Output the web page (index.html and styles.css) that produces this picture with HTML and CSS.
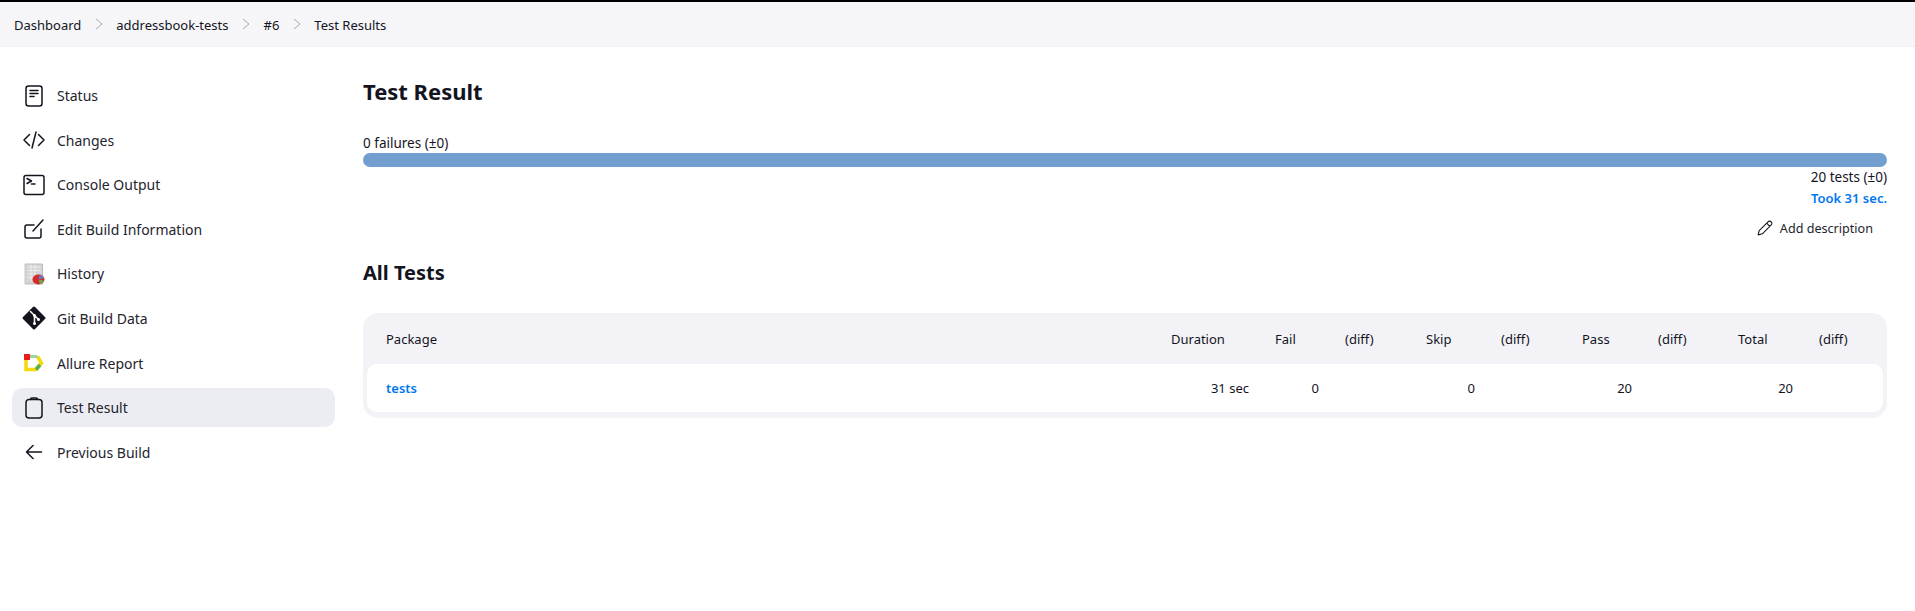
FILE: index.html
```html
<!DOCTYPE html>
<html>
<head>
    <title>Test Results</title>
    <link rel="stylesheet" href="styles.css">
</head>
<body>
    <div class="breadcrumbs">
        <span>Dashboard</span>
        <svg class="crumb-sep" viewBox="0 0 8 12"><path d="M1 1l6 5-6 5"/></svg>
        <span>addressbook-tests</span>
        <svg class="crumb-sep" viewBox="0 0 8 12"><path d="M1 1l6 5-6 5"/></svg>
        <span>#6</span>
        <svg class="crumb-sep" viewBox="0 0 8 12"><path d="M1 1l6 5-6 5"/></svg>
        <span>Test Results</span>
    </div>

    <div class="page">
        <div class="sidebar">
            <div class="task">
                <svg class="icon" viewBox="0 0 24 24"><rect x="4" y="2" width="16" height="20" rx="2.500"/><path d="M8 6.500h8M8 9.500h8M8 12.500h4"/></svg>
                <span>Status</span>
            </div>
            <div class="task">
                <svg class="icon" viewBox="0 0 24 24"><path d="M7.500 6.500L2 12l5.500 5.500M16.500 6.500L22 12l-5.500 5.500M14 4l-4 16"/></svg>
                <span>Changes</span>
            </div>
            <div class="task">
                <svg class="icon" viewBox="0 0 24 24"><rect x="2" y="2.500" width="20" height="19" rx="2"/><path d="M5 5.500l4.500 2.500L5 10.500M9.500 11h3.500"/></svg>
                <span>Console Output</span>
            </div>
            <div class="task">
                <svg class="icon" viewBox="0 0 24 24"><path d="M12 8H5a2 2 0 0 0-2 2v9a2 2 0 0 0 2 2h12a2 2 0 0 0 2-2v-7M21 3L11 14"/></svg>
                <span>Edit Build Information</span>
            </div>
            <div class="task">
                <svg class="icon" viewBox="0 0 24 24">
                    <rect class="sheet" x="3.500" y="2" width="17" height="20"/>
                    <path class="grid-lines" d="M6 5h12M6 8.500h12M6 12h6M6 15.500h5M9 3v16M13 3v9"/>
                    <ellipse class="pie" cx="16.500" cy="17.500" rx="6" ry="5"/>
                    <path class="pie-green" d="M16.500 17.500l5.500 1a6 5 0 0 1-4 3.800z"/>
                    <path class="pie-blue" d="M16.500 17.500l1-4.800a6 5 0 0 1 4.500 3.500z"/>
                </svg>
                <span>History</span>
            </div>
            <div class="task">
                <svg class="icon" viewBox="0 0 24 24">
                    <rect class="git" x="3.500" y="3.500" width="17" height="17" rx="1.500" transform="rotate(45 12 12)"/>
                    <path class="git-line" d="M8.500 5.500l4 4M12.500 9.500v7.500M12.500 9.500l4 4"/>
                    <circle class="git-dot" cx="12.500" cy="9.500" r="1.500"/>
                    <circle class="git-dot" cx="12.500" cy="17.500" r="1.500"/>
                    <circle class="git-dot" cx="16.500" cy="13.500" r="1.500"/>
                </svg>
                <span>Git Build Data</span>
            </div>
            <div class="task">
                <svg class="icon" viewBox="0 0 24 24">
                    <path class="allure-yellow" d="M4 6v12.500h10l5.500-6.500-4-6.500"/>
                    <path class="allure-light" d="M8 5.500h7.500"/>
                    <path class="allure-green" d="M14 18.500l4-4.500"/>
                    <path class="allure-red" d="M2 3h6v6H2z"/>
                </svg>
                <span>Allure Report</span>
            </div>
            <div class="task task-active">
                <svg class="icon" viewBox="0 0 24 24"><rect x="4" y="3.500" width="16" height="18.500" rx="3"/><path d="M8.500 3.500c0-1 .5-1.500 1.500-1.500h4c1 0 1.500.5 1.500 1.500"/></svg>
                <span>Test Result</span>
            </div>
            <div class="task">
                <svg class="icon" viewBox="0 0 24 24"><path d="M19.500 12H4.500M11 5.500L4.500 12l6.500 6.500"/></svg>
                <span>Previous Build</span>
            </div>
        </div>

        <div class="main">
            <h1>Test Result</h1>
            <div class="failures">0 failures (±0)</div>
            <div class="bar"></div>
            <div class="summary">20 tests (±0)</div>
            <div class="summary"><a href="#" class="took">Took 31 sec.</a></div>
            <div class="description">
                <svg class="pencil" viewBox="0 0 24 24"><path d="M3 21l1.500-6L17 2.500a2.500 2.500 0 0 1 4.500 4.500L9 19.500zM15 4.500l4.500 4.500"/></svg>
                <span>Add description</span>
            </div>
            <h2>All Tests</h2>
            <div class="table-wrap">
                <table>
                    <colgroup>
                        <col>
                        <col class="c104">
                        <col class="c70">
                        <col class="c81">
                        <col class="c75">
                        <col class="c81">
                        <col class="c76">
                        <col class="c80">
                        <col class="c81">
                        <col class="c64">
                    </colgroup>
                    <thead>
                        <tr>
                            <th class="name">Package</th>
                            <th>Duration</th>
                            <th>Fail</th>
                            <th>(diff)</th>
                            <th>Skip</th>
                            <th>(diff)</th>
                            <th>Pass</th>
                            <th>(diff)</th>
                            <th>Total</th>
                            <th>(diff)</th>
                        </tr>
                    </thead>
                    <tbody>
                        <tr>
                            <td class="name"><a href="#">tests</a></td>
                            <td class="num">31 sec</td>
                            <td class="num">0</td>
                            <td></td>
                            <td class="num">0</td>
                            <td></td>
                            <td class="num">20</td>
                            <td></td>
                            <td class="num">20</td>
                            <td></td>
                        </tr>
                    </tbody>
                </table>
            </div>
        </div>
    </div>
</body>
</html>
```

FILE: styles.css
```css
body {
    font-family: "Noto Sans", Arial, sans-serif;
    font-size: 13px;
    color: #14141f;
    background-color: white;
    margin: 0;
    border-top: 2px solid black;
}

a {
    text-decoration: none;
    color: #0077ee;
}

.breadcrumbs {
    display: flex;
    align-items: center;
    height: 45px;
    padding: 2px 0 0 14px;
    gap: 13.5px;
    background-color: #f6f6f8;
    border-bottom: 1px solid #f0f0f3;
    box-sizing: border-box;
}

.crumb-sep {
    width: 8px;
    height: 12px;
    margin-top: -3px;
    fill: none;
    stroke: #a8a8ae;
    stroke-width: 1;
}

.page {
    display: flex;
}

.sidebar {
    width: 323px;
    margin-left: 12px;
    padding-top: 29px;
    display: flex;
    flex-direction: column;
    gap: 5.6px;
    flex-shrink: 0;
}

.task {
    display: flex;
    align-items: center;
    gap: 11px;
    height: 39px;
    padding-left: 10px;
    border-radius: 10px;
    font-size: 14px;
    color: #24242e;
}

.task-active {
    background-color: #ecedf2;
}

.icon {
    width: 24px;
    height: 24px;
    fill: none;
    stroke: #14141f;
    stroke-width: 1.500;
    stroke-linecap: round;
    stroke-linejoin: round;
    flex-shrink: 0;
}

.sheet { fill: #d4d4d4; stroke: #bcbcbc; stroke-width: 1; }
.grid-lines { stroke: #ececec; stroke-width: 1; }
.pie { fill: #d8282c; stroke: none; }
.pie-green { fill: #6aa84f; stroke: none; }
.pie-blue { fill: #5a7fc0; stroke: none; }
.git { fill: #14141f; stroke: none; }
.git-line { stroke: white; stroke-width: 1.500; }
.git-dot { fill: white; stroke: none; }
.allure-yellow { stroke: #f5d90a; stroke-width: 3.500; stroke-linecap: butt; stroke-linejoin: miter; }
.allure-light { stroke: #9fd49a; stroke-width: 3; stroke-linecap: butt; }
.allure-green { stroke: #58b04c; stroke-width: 3.500; stroke-linecap: butt; }
.allure-red { fill: #ea1c1c; stroke: none; }

.main {
    flex: 1;
    margin: 0 28px 0 28px;
    min-width: 0;
}

h1 {
    font-size: 22px;
    line-height: 30px;
    margin: 29px 0 0;
}

h2 {
    font-size: 20px;
    line-height: 28px;
    margin: 19px 0 26px;
}

.failures {
    margin-top: 28px;
    line-height: 19px;
    font-size: 13.500px;
}

.bar {
    height: 14px;
    border-radius: 7px;
    background-color: #729fcf;
}

.summary {
    text-align: right;
    line-height: 21px;
    font-size: 13.500px;
}

.took {
    font-size: 13px;
    font-weight: 600;
}

.description {
    display: flex;
    justify-content: flex-end;
    align-items: center;
    gap: 7px;
    height: 24px;
    margin-top: 7px;
    padding-right: 14px;
    font-size: 12.600px;
    color: #24242e;
}

.pencil {
    width: 17px;
    height: 17px;
    fill: none;
    stroke: #14141f;
    stroke-width: 1.500;
    stroke-linejoin: round;
}

.table-wrap {
    background-color: #f3f3f7;
    border-radius: 15px;
    padding: 0 4px 6px;
}

table {
    width: 100%;
    table-layout: fixed;
    border-collapse: separate;
    border-spacing: 0;
}

.c104 { width: 104px; }
.c70 { width: 70px; }
.c81 { width: 81px; }
.c75 { width: 75px; }
.c76 { width: 76px; }
.c80 { width: 80px; }
.c64 { width: 64px; }

th {
    height: 51px;
    padding: 0;
    text-align: left;
    font-weight: normal;
}

td {
    height: 48px;
    padding: 0;
    background-color: white;
}

.name {
    padding-left: 19px;
}

td.name {
    font-weight: 600;
    border-radius: 10px 0 0 10px;
}

td:last-child {
    border-radius: 0 10px 10px 0;
}

.num {
    text-align: right;
    padding-right: 26px;
}
```
